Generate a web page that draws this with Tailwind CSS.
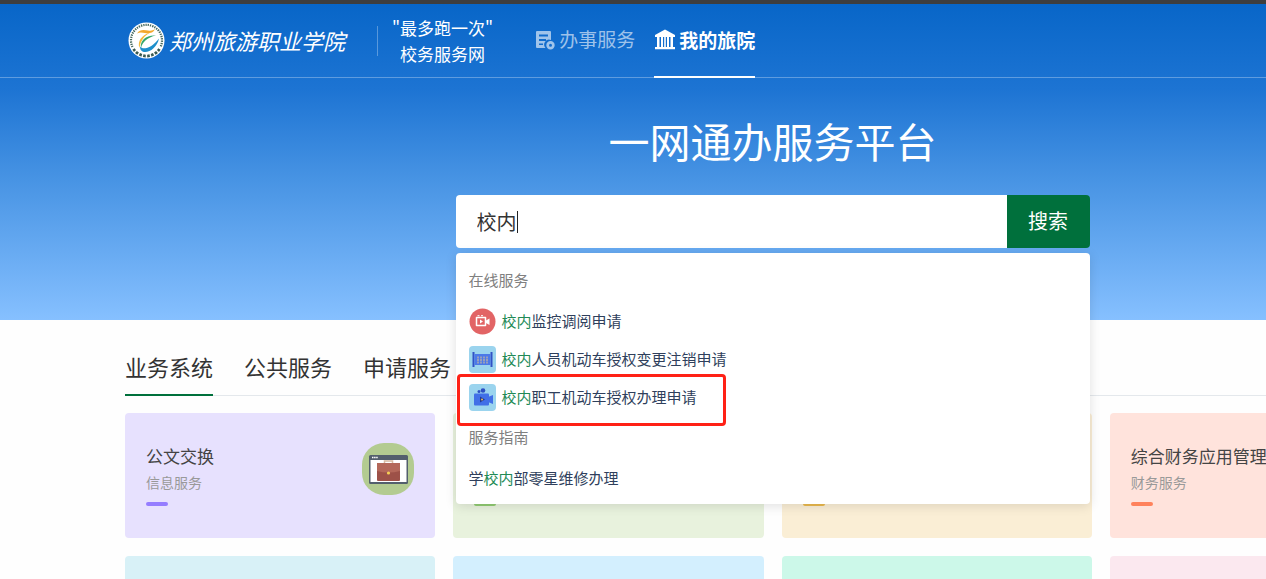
<!DOCTYPE html>
<html lang="zh-CN">
<head>
    <meta charset="UTF-8">
    <meta name="viewport" content="width=device-width, initial-scale=1.0">
    <title>一网通办服务平台</title>
    <script src="https://cdn.jsdelivr.net/npm/@tailwindcss/browser@4"></script>
</head>
<body class="h-screen overflow-hidden bg-[#fefefe] font-['Noto_Sans_CJK_SC',sans-serif]">
    <div class="min-w-[1545px] border-t-4 border-[#3e3e3e]">

        <!-- Hero -->
        <div class="h-[316px] bg-[linear-gradient(to_bottom,#0866c8,#1d74d3_27%,#4894e4_56%,#86c0ff)] text-white">
            <header class="flex h-[74px] items-stretch border-b border-white/30 px-[125px]">
                <a href="#" class="flex items-center gap-1 pl-[3px]">
                    <svg class="size-[37px]" viewBox="0 0 37 37" fill="none">
                        <circle cx="18.500" cy="18.500" r="18" fill="#fff"/>
                        <path d="M4.500 25A15.500 15.500 0 1 1 32.500 25" stroke="#46695f" stroke-width="2.200" stroke-dasharray="1.300 1"/>
                        <path d="M5.500 27A15.500 15.500 0 0 0 31.500 27" stroke="#3a5a50" stroke-width="2.800" stroke-dasharray="2.600 1.400"/>
                        <path d="M9 11.500C12 6.500 17 8 20 8.500C23 9 25 8.500 27 7C24.500 12 20 11.500 17 11C14 10.500 11.500 10 9 11.500Z" fill="#f3a92c"/>
                        <path d="M22 10.500C14 13 9 19 11.500 26C12.500 19 16 14 22 10.500Z" fill="#f5b93a"/>
                        <path d="M28 13.500C19 12.500 11.500 18 13 26C14.500 20 19 15.500 28 13.500Z" fill="#35a76b"/>
                        <path d="M12 24.500C15 28.500 24 26 31 16.500C29 26 20 32 14.500 29.500C12.500 28.500 12 26.500 12 24.500Z" fill="#1e8fcb"/>
                    </svg>
                    <span class="text-[22px] italic">郑州旅游职业学院</span>
                </a>
                <div class="ml-[32px] h-[30px] w-px self-center bg-white/30"></div>
                <p class="ml-[14px] self-center text-center text-[17px] leading-[26px]">"最多跑一次"<br>校务服务网</p>
                <nav class="ml-[41px] flex text-[19px]">
                    <a href="#" class="flex items-center gap-[3px] pb-0.5 text-white/60">
                        <svg class="size-[22px]" viewBox="0 0 22 22" fill="currentColor">
                            <path fill-rule="evenodd" d="M3 2h13a1 1 0 0 1 1 1v8a5 5 0 0 0-5.500 8H3a1 1 0 0 1-1-1V3a1 1 0 0 1 1-1zM5 5.500v2h9v-2zM5 10v2h7v-2zM5 14.500v1.500h4v-1.500z"/>
                            <path fill-rule="evenodd" d="M16.500 12a4.200 4.200 0 1 1 0 8.400a4.200 4.200 0 0 1 0-8.400zM16.500 14.700a1.500 1.500 0 1 0 0 3a1.500 1.500 0 0 0 0-3z"/>
                        </svg>
                        办事服务
                    </a>
                    <a href="#" class="-mb-px ml-[19px] flex items-center gap-[3px] border-b-2 border-white font-bold">
                        <svg class="size-[22px]" viewBox="0 0 22 22" fill="currentColor">
                            <path d="M11 .5L21 6V8H1V6z"/>
                            <path d="M3 8h2.500v10H3zM7 8h2v10H7zM10.200 8h1.600v10h-1.600zM13 8h2v10h-2zM16.500 8H19v10h-2.500zM1 18h20v2.200H1z"/>
                        </svg>
                        我的旅院
                    </a>
                </nav>
            </header>

            <div class="mx-auto flex w-[634px] flex-col pt-8">
                <h1 class="text-center text-[41px] leading-[60px]">一网通办服务平台</h1>

                <form class="relative mt-[25px] flex h-[53px] text-xl">
                    <input type="text" value="校内" aria-label="搜索服务" class="min-w-0 flex-1 rounded-l bg-white pr-4 pl-[21px] text-[#333] outline-none">
                    <span class="absolute top-4 left-[61px] h-[22px] w-px bg-[#222]"></span>
                    <button type="submit" class="w-[83px] rounded-r bg-[#00703c] pb-0.5 text-white">搜索</button>

                    <!-- Suggestions -->
                    <div class="absolute top-[58px] left-0 z-10 h-[251px] w-full rounded bg-white px-[13px] pt-4 text-[15px] leading-[22px] text-[#2f3f5c] shadow-[0_2px_12px_rgba(0,0,0,0.12)]">
                        <h2 class="text-[#808080]">在线服务</h2>
                        <ul class="mt-[11px]">
                            <li>
                                <a href="#" class="flex h-[38px] items-center gap-[6px]">
                                    <svg class="size-[27px]" viewBox="0 0 27 27" fill="none">
                                        <circle cx="13.500" cy="13.500" r="13" fill="#e26465"/>
                                        <path d="M7.500 9.500h9v8h-9z" stroke="#fff" stroke-width="1.500" stroke-linejoin="round"/>
                                        <path d="M17 12.500l3.500-2v6.500l-3.500-2zM11 11.500l3 2l-3 2z" fill="#fff"/>
                                        <path d="M8.500 7.700h2M12 7.700h2" stroke="#fff"/>
                                    </svg>
                                    <span><span class="text-[#218a55]">校内</span>监控调阅申请</span>
                                </a>
                            </li>
                            <li>
                                <a href="#" class="flex h-[38px] items-center gap-[6px]">
                                    <svg class="size-[27px]" viewBox="0 0 27 27">
                                        <rect width="27" height="27" rx="4" fill="#9bd4ee"/>
                                        <path d="M3.500 6h2v15h-2zM21.500 6h2v15h-2z" fill="#3152c5"/>
                                        <path d="M5.500 8h16v11h-16z" fill="#4c79e8"/>
                                        <path d="M9 10.500v7M12 10.500v7M15 10.500v7M18 10.500v7" stroke="#a2a4b6" stroke-width="1.800" stroke-dasharray="2 .5"/>
                                    </svg>
                                    <span><span class="text-[#218a55]">校内</span>人员机动车授权变更注销申请</span>
                                </a>
                            </li>
                            <li class="relative">
                                <a href="#" class="flex h-[38px] items-center gap-[6px]">
                                    <svg class="size-[27px]" viewBox="0 0 27 27">
                                        <rect width="27" height="27" rx="4" fill="#9bd4ee"/>
                                        <circle cx="10" cy="7.500" r="1.500" fill="#2c4fc3"/>
                                        <circle cx="14" cy="6.500" r="2.300" fill="#2c4fc3"/>
                                        <rect x="5" y="9.500" width="15" height="12" rx="1" fill="#416fe7"/>
                                        <path d="M19 13l5-2v9l-5-2z" fill="#416fe7"/>
                                        <path d="M11 12.500l5 3l-5 3z" fill="#243a92"/>
                                        <circle cx="13" cy="15.500" r="1" fill="#e8bd58"/>
                                    </svg>
                                    <span><span class="text-[#218a55]">校内</span>职工机动车授权办理申请</span>
                                </a>
                                <div class="pointer-events-none absolute -top-1 -left-3 h-[52px] w-[269px] rounded-sm border-3 border-[#ff2116]"></div>
                            </li>
                        </ul>
                        <h2 class="mt-[10px] text-[#808080]">服务指南</h2>
                        <a href="#" class="mt-[19px] block">学<span class="text-[#218a55]">校内</span>部零星维修办理</a>
                    </div>
                </form>
            </div>
        </div>

        <main class="px-[125px] pt-[26px]">
            <nav class="flex gap-[31px] border-b border-[#e4e8ec] text-[22px] leading-[40px] text-[#333]">
                <a href="#" class="-mb-px border-b-2 border-[#00703c] pb-2">业务系统</a>
                <a href="#">公共服务</a>
                <a href="#">申请服务</a>
            </nav>

            <div class="mt-[17px] grid grid-cols-4 gap-[18px]">
                <a href="#" class="flex h-[125px] items-start justify-between rounded bg-[#e7e1fe] px-[21px] pt-[30px]">
                    <div>
                        <h3 class="text-[17px] leading-[25px] text-[#444]">公文交换</h3>
                        <p class="text-sm leading-[28px] text-[#999]">信息服务</p>
                        <div class="mt-[6px] h-1 w-[22px] rounded-full bg-[#957dff]"></div>
                    </div>
                    <svg class="size-[52px]" viewBox="0 0 52 52">
                        <rect width="52" height="52" rx="22" fill="#b3cb91"/>
                        <rect x="7" y="12" width="39" height="29" rx="1.500" fill="#535f6d"/>
                        <path d="M8.500 17h36v22h-36z" fill="#fff"/>
                        <path d="M10 14.500h6" stroke="#fff" stroke-width="1.500" stroke-dasharray="1.500 .6"/>
                        <path d="M22.500 20.500v-2.500h8v2.500" fill="none" stroke="#d6b9a0" stroke-width="1.500"/>
                        <rect x="15" y="20" width="23" height="18" rx="1" fill="#9d5148"/>
                        <path d="M15 20h23v8q-11.500 3-23 0z" fill="#b4685a"/>
                        <circle cx="26.500" cy="30" r="1.600" fill="#f7cf55"/>
                    </svg>
                </a>
                <a href="#" aria-label="业务系统" class="h-[125px] rounded bg-[#e8f2dd] px-[21px] pt-[89px]">
                    <div class="h-1 w-[22px] rounded-full bg-[#91cb73]"></div>
                </a>
                <a href="#" aria-label="业务系统" class="h-[125px] rounded bg-[#faeed5] px-[21px] pt-[89px]">
                    <div class="h-1 w-[22px] rounded-full bg-[#eab94d]"></div>
                </a>
                <a href="#" class="h-[125px] rounded bg-[#ffe3dc] px-[21px] pt-[30px]">
                    <h3 class="text-[17px] leading-[25px] whitespace-nowrap text-[#444]">综合财务应用管理平台</h3>
                    <p class="text-sm leading-[28px] text-[#999]">财务服务</p>
                    <div class="mt-[6px] h-1 w-[22px] rounded-full bg-[#ff825c]"></div>
                </a>
                <div class="h-[125px] rounded bg-[#d8f1f7]"></div>
                <div class="h-[125px] rounded bg-[#d3effe]"></div>
                <div class="h-[125px] rounded bg-[#ccf8e9]"></div>
                <div class="h-[125px] rounded bg-[#fbe8ef]"></div>
            </div>
        </main>
    </div>
</body>
</html>
